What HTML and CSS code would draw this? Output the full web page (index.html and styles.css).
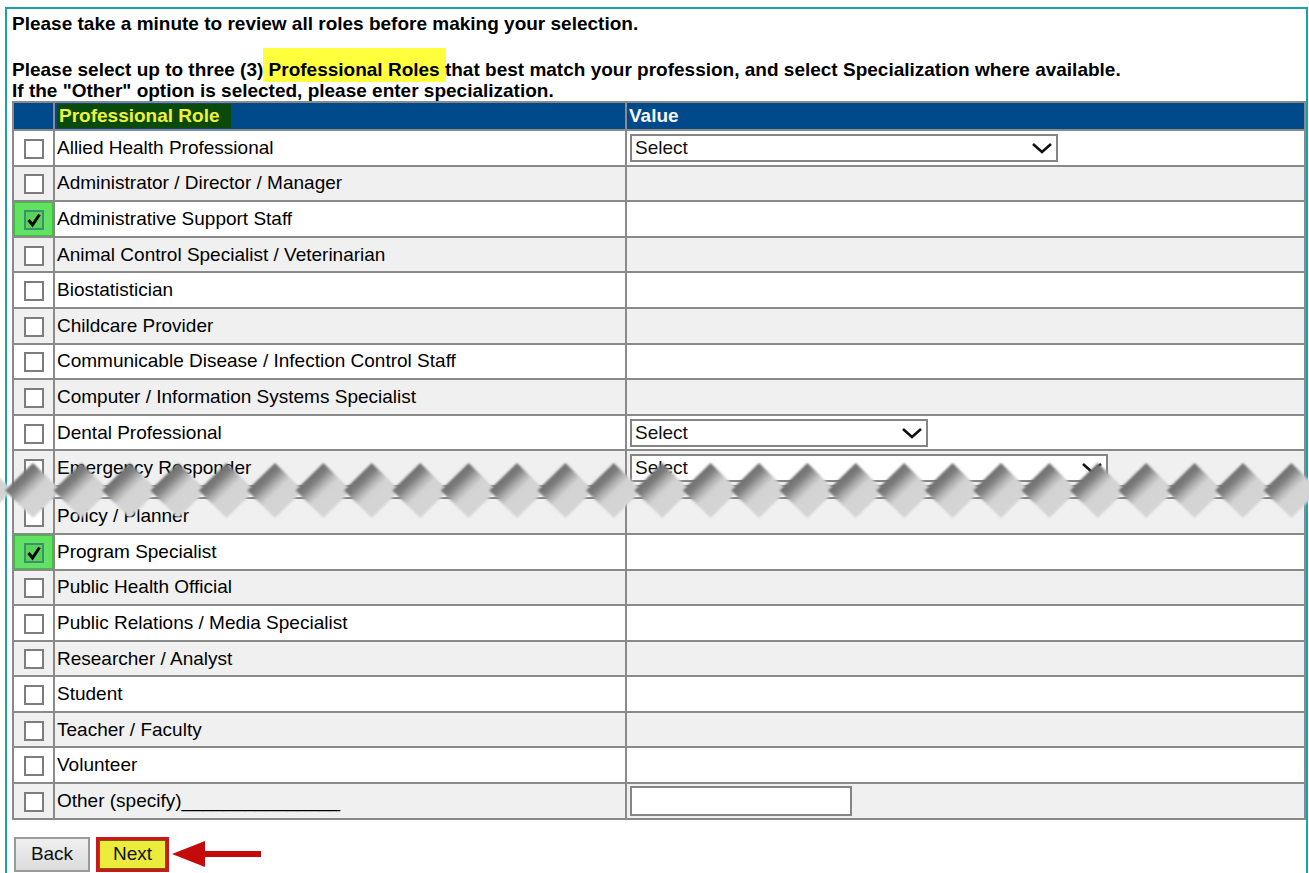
FILE: index.html
```html
<!DOCTYPE html>
<html lang="en">
<head>
<meta charset="utf-8">
<title>Professional Roles</title>
<link rel="stylesheet" href="styles.css">
</head>
<body>
<div class="frame">
  <p class="intro intro-first">Please take a minute to review all roles before making your selection.</p>
  <p class="intro">Please select up to three (3) <span class="mark">Professional Roles</span> that best match your profession, and select Specialization where available.<br>If the "Other" option is selected, please enter specialization.</p>

  <table class="roles">
    <colgroup>
      <col class="c-check">
      <col class="c-role">
      <col class="c-value">
    </colgroup>
    <thead>
      <tr>
        <th></th>
        <th><span class="head-mark">Professional Role</span></th>
        <th>Value</th>
      </tr>
    </thead>
    <tbody>
      <tr>
        <td class="chk"><span class="cb"></span></td>
        <td>Allied Health Professional</td>
        <td class="val"><div class="sel sel-wide"><span>Select</span><svg width="22" height="12" viewBox="0 0 22 12"><polyline points="2,2 11,10 20,2" fill="none" stroke="#111" stroke-width="2.6"/></svg></div></td>
      </tr>
      <tr class="alt">
        <td class="chk"><span class="cb"></span></td>
        <td>Administrator / Director / Manager</td>
        <td class="val"></td>
      </tr>
      <tr>
        <td class="chk on"><span class="cb cb-on"><svg width="16" height="16" viewBox="0 0 16 16"><polyline points="2.5,8 6.5,13 13.5,2.5" fill="none" stroke="#000" stroke-width="3"/></svg></span></td>
        <td>Administrative Support Staff</td>
        <td class="val"></td>
      </tr>
      <tr class="alt">
        <td class="chk"><span class="cb"></span></td>
        <td>Animal Control Specialist / Veterinarian</td>
        <td class="val"></td>
      </tr>
      <tr>
        <td class="chk"><span class="cb"></span></td>
        <td>Biostatistician</td>
        <td class="val"></td>
      </tr>
      <tr class="alt">
        <td class="chk"><span class="cb"></span></td>
        <td>Childcare Provider</td>
        <td class="val"></td>
      </tr>
      <tr>
        <td class="chk"><span class="cb"></span></td>
        <td>Communicable Disease / Infection Control Staff</td>
        <td class="val"></td>
      </tr>
      <tr class="alt">
        <td class="chk"><span class="cb"></span></td>
        <td>Computer / Information Systems Specialist</td>
        <td class="val"></td>
      </tr>
      <tr>
        <td class="chk"><span class="cb"></span></td>
        <td>Dental Professional</td>
        <td class="val"><div class="sel sel-short"><span>Select</span><svg width="22" height="12" viewBox="0 0 22 12"><polyline points="2,2 11,10 20,2" fill="none" stroke="#111" stroke-width="2.6"/></svg></div></td>
      </tr>
      <tr class="alt">
        <td class="chk"><span class="cb"></span></td>
        <td>Emergency Responder</td>
        <td class="val"><div class="sel sel-long"><span>Select</span><svg width="22" height="12" viewBox="0 0 22 12"><polyline points="2,2 11,10 20,2" fill="none" stroke="#111" stroke-width="2.6"/></svg></div></td>
      </tr>
      <tr class="gap">
        <td></td><td></td><td></td>
      </tr>
      <tr class="alt">
        <td class="chk"><span class="cb"></span></td>
        <td>Policy / Planner</td>
        <td class="val"></td>
      </tr>
      <tr>
        <td class="chk on"><span class="cb cb-on"><svg width="16" height="16" viewBox="0 0 16 16"><polyline points="2.5,8 6.5,13 13.5,2.5" fill="none" stroke="#000" stroke-width="3"/></svg></span></td>
        <td>Program Specialist</td>
        <td class="val"></td>
      </tr>
      <tr class="alt">
        <td class="chk"><span class="cb"></span></td>
        <td>Public Health Official</td>
        <td class="val"></td>
      </tr>
      <tr>
        <td class="chk"><span class="cb"></span></td>
        <td>Public Relations / Media Specialist</td>
        <td class="val"></td>
      </tr>
      <tr class="alt">
        <td class="chk"><span class="cb"></span></td>
        <td>Researcher / Analyst</td>
        <td class="val"></td>
      </tr>
      <tr>
        <td class="chk"><span class="cb"></span></td>
        <td>Student</td>
        <td class="val"></td>
      </tr>
      <tr class="alt">
        <td class="chk"><span class="cb"></span></td>
        <td>Teacher / Faculty</td>
        <td class="val"></td>
      </tr>
      <tr>
        <td class="chk"><span class="cb"></span></td>
        <td>Volunteer</td>
        <td class="val"></td>
      </tr>
      <tr class="alt">
        <td class="chk"><span class="cb"></span></td>
        <td>Other (specify)_______________</td>
        <td class="val"><div class="txt"></div></td>
      </tr>
    </tbody>
  </table>

  <div class="actions">
    <button class="btn btn-back" type="button">Back</button>
    <button class="btn btn-next" type="button">Next</button>
    <svg class="pointer" width="90" height="30" viewBox="0 0 90 30">
      <polygon points="0,15 33,2 33,28" fill="#c40a0a"/>
      <rect x="32" y="12" width="57" height="6" fill="#c40a0a"/>
    </svg>
  </div>

  <!-- torn-page break across the list -->
  <svg class="tear" width="1309" height="66" viewBox="0 0 1309 66">
    <defs>
      <linearGradient id="edge" x1="0" y1="0" x2="1" y2="1">
        <stop offset="0.25" stop-color="#6e6e6e"/>
        <stop offset="0.34" stop-color="#7e7e7e"/>
        <stop offset="0.44" stop-color="#b2b2b2"/>
        <stop offset="0.52" stop-color="#d3d3d3"/>
        <stop offset="1" stop-color="#d6d6d6"/>
      </linearGradient>
      <filter id="soft" x="-5%" y="-20%" width="110%" height="140%">
        <feGaussianBlur stdDeviation="0.8"/>
      </filter>
      <polygon id="dm" points="0,5 28,32.5 0,60 -28,32.5" fill="url(#edge)"/>
    </defs>
    <g filter="url(#soft)">
      <use href="#dm" x="-15.4"/>
      <use href="#dm" x="33"/>
      <use href="#dm" x="81.4"/>
      <use href="#dm" x="129.8"/>
      <use href="#dm" x="178.2"/>
      <use href="#dm" x="226.6"/>
      <use href="#dm" x="275"/>
      <use href="#dm" x="323.4"/>
      <use href="#dm" x="371.8"/>
      <use href="#dm" x="420.2"/>
      <use href="#dm" x="468.6"/>
      <use href="#dm" x="517"/>
      <use href="#dm" x="565.4"/>
      <use href="#dm" x="613.8"/>
      <use href="#dm" x="662.2"/>
      <use href="#dm" x="710.6"/>
      <use href="#dm" x="759"/>
      <use href="#dm" x="807.4"/>
      <use href="#dm" x="855.8"/>
      <use href="#dm" x="904.2"/>
      <use href="#dm" x="952.6"/>
      <use href="#dm" x="1001"/>
      <use href="#dm" x="1049.4"/>
      <use href="#dm" x="1097.8"/>
      <use href="#dm" x="1146.2"/>
      <use href="#dm" x="1194.6"/>
      <use href="#dm" x="1243"/>
      <use href="#dm" x="1291.4"/>
      <use href="#dm" x="1339.8"/>
    </g>
  </svg>
</div>
</body>
</html>
```

FILE: styles.css
```css
html, body {
  margin: 0;
  padding: 0;
  overflow: hidden;
  background: #fff;
}

body {
  font-family: "Liberation Sans", Arial, sans-serif;
  font-size: 19px;
  color: #000;
}

/* teal page frame */
.frame {
  position: relative;
  box-sizing: border-box;
  width: 1303px;
  height: 900px;
  margin: 7px 0 0 5px;
  padding: 4px 0 0 5px;
  border: 2px solid #17a3ac;
  border-bottom: none;
}

.intro {
  margin: 0;
  font-weight: bold;
  line-height: 21px;
}

.intro-first {
  margin-bottom: 25px;
}

.mark {
  background: #ffff3d;
  padding: 11px 6px 2px;
  margin: 0 -6px;
}

/* roles table */
.roles {
  width: 100%;
  table-layout: fixed;
  border-collapse: collapse;
}

.c-check { width: 41px; }
.c-role { width: 572px; }

.roles th,
.roles td {
  border: 2px solid #8a8a8a;
  padding: 0 2px;
  text-align: left;
  vertical-align: middle;
  white-space: nowrap;
  overflow: hidden;
}

.roles thead tr {
  height: 28px;
  background: #004a8b;
}

.roles th {
  color: #f4f4f4;
  font-weight: bold;
  line-height: 22px;
}

.head-mark {
  display: inline-block;
  background: #0a4b0c;
  color: #eef23e;
  padding: 1px 11px 1px 2px;
}

.roles tbody tr {
  height: 35.6px;
  background: #fff;
}

.roles tbody tr.alt {
  background: #f0f0f0;
}

.roles tbody tr.gap {
  height: 12.4px;
}

.roles td.chk {
  padding: 0;
  text-align: center;
}

.roles td.val {
  padding: 0 3px;
}

.roles td.on {
  background: #62e262;
  box-shadow: inset 0 0 0 1px #3fbd3f;
}

.cb {
  display: inline-flex;
  align-items: center;
  justify-content: center;
  box-sizing: border-box;
  width: 20px;
  height: 20px;
  border: 2px solid #7d7d7d;
  background: #fff;
  vertical-align: middle;
}

.cb-on {
  background: #5ad35a;
  border-color: #3c8f6f;
}

/* dropdowns */
.sel {
  display: flex;
  align-items: center;
  justify-content: space-between;
  box-sizing: border-box;
  height: 28px;
  padding: 0 3px 0 3px;
  border: 2px solid #858585;
  background: #fff;
  color: #111;
}

.sel-wide { width: 428px; }
.sel-short { width: 298px; }
.sel-long { width: 478px; }

.txt {
  box-sizing: border-box;
  width: 222px;
  height: 30px;
  border: 2px solid #858585;
  background: #fff;
}

/* buttons */
.actions {
  display: flex;
  align-items: center;
  gap: 6px;
  margin-top: 17px;
  padding-left: 2px;
}

.btn {
  box-sizing: border-box;
  height: 35px;
  font-family: "Liberation Sans", Arial, sans-serif;
  font-size: 19px;
  color: #111;
  padding: 0;
}

.btn-back {
  width: 76px;
  background: linear-gradient(#efefef, #dcdcdc);
  border: 2px solid #9a9a9a;
}

.btn-next {
  width: 73px;
  background: #ecec3c;
  border: 3px solid #c81a1a;
  box-shadow: inset 0 0 0 1px #7a5a00;
}

.pointer {
  margin-left: -3px;
}

/* torn break laid over the list */
.tear {
  position: absolute;
  left: -7px;
  top: 449px;
}
```
